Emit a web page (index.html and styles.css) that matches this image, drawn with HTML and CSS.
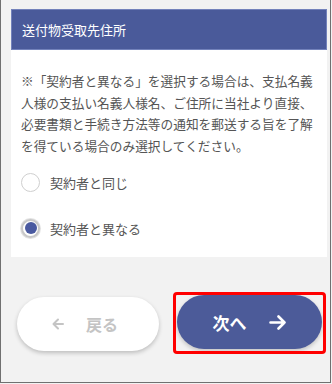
FILE: index.html
```html
<!DOCTYPE html>
<html lang="ja">
<head>
<meta charset="utf-8">
<link rel="stylesheet" href="styles.css">
</head>
<body>
<div class="frame">
  <section class="card">
    <h2 class="card-title">送付物受取先住所</h2>
    <div class="card-body">
      <p class="note">※「契約者と異なる」を選択する場合は、支払名義<br>人様の支払い名義人様名、ご住所に当社より直接、<br>必要書類と手続き方法等の通知を郵送する旨を了解<br>を得ている場合のみ選択してください。</p>
      <label class="radio-row"><span class="radio"></span><span class="radio-label">契約者と同じ</span></label>
      <label class="radio-row"><span class="radio checked"></span><span class="radio-label">契約者と異なる</span></label>
    </div>
  </section>
  <div class="actions">
    <button class="btn btn-back">
      <svg class="arrow-back" width="12" height="12" viewBox="0 0 12 12"><path d="M11 6H2M6 1.5L1.5 6L6 10.5" fill="none" stroke="#c4c4c4" stroke-width="2" stroke-linecap="round" stroke-linejoin="round"/></svg>
      <span>戻る</span>
    </button>
    <button class="btn btn-next">
      <span>次へ</span>
      <svg class="arrow-next" width="18" height="15" viewBox="0 0 18 15"><path d="M1.5 7.5H15.5M9.5 1.5L15.5 7.5L9.5 13.5" fill="none" stroke="#fff" stroke-width="2.6" stroke-linecap="round" stroke-linejoin="round"/></svg>
    </button>
  </div>
  <div class="highlight"></div>
</div>
</body>
</html>
```
FILE: styles.css
```css
html, body {
  margin: 0;
  padding: 0;
}
body {
  background: #f2f2f2;
  font-family: "Noto Sans CJK JP", "Noto Sans", sans-serif;
}
.frame {
  position: relative;
  box-sizing: border-box;
  width: 331px;
  height: 383px;
  border-left: 1px solid #707070;
  border-right: 1px solid #707070;
  border-bottom: 1px solid #707070;
  padding: 9px 4px 0 10px;
  background: #f2f2f2;
}
.card {
  background: #fff;
  width: 316px;
}
.card-title {
  margin: 0;
  height: 41px;
  box-sizing: border-box;
  background: #4a5a9a;
  border: 1px solid #7382bb;
  color: #fff;
  font-size: 13px;
  font-weight: normal;
  line-height: 39px;
  padding-left: 10px;
}
.card-body {
  padding: 20px 4px 6px 10px;
}
.note {
  margin: 0;
  font-size: 12.7px;
  line-height: 21.5px;
  color: #555;
  white-space: nowrap;
}
.radio-row {
  display: flex;
  align-items: center;
  height: 46px;
  gap: 10px;
}
.note + .radio-row {
  margin-top: 3px;
}
.radio {
  box-sizing: border-box;
  width: 19px;
  height: 19px;
  border-radius: 50%;
  border: 1.5px solid #cfcfcf;
  background: #fff;
  position: relative;
}
.radio.checked {
  border: 2px solid #c8c8c8;
  box-shadow: 0 0 0 1px #e2e2e2;
}
.radio.checked::after {
  content: "";
  position: absolute;
  left: 1.5px;
  top: 1.5px;
  width: 12px;
  height: 12px;
  border-radius: 50%;
  background: #4a5aa0;
}
.radio-label {
  font-size: 13px;
  color: #555;
}
.actions {
  display: flex;
  gap: 18px;
  margin-top: 40px;
  padding-left: 6px;
}
.btn {
  height: 54px;
  border: none;
  border-radius: 27px;
  display: flex;
  align-items: center;
  justify-content: center;
  font-family: "Noto Sans CJK JP", "Noto Sans", sans-serif;
  font-weight: bold;
  font-size: 16px;
  padding: 0;
}
.btn-back {
  width: 142px;
  background: #fff;
  color: #c4c4c4;
  gap: 22px;
  box-shadow: 0 2px 4px rgba(0,0,0,0.22);
  padding-right: 6px;
}
.btn-next {
  width: 145px;
  background: #4c5b99;
  color: #fff;
  gap: 22px;
  box-shadow: 0 2px 4px rgba(0,0,0,0.2);
  margin-top: -2px;
  font-size: 17px;
}
.highlight {
  position: absolute;
  left: 172px;
  top: 292px;
  width: 147px;
  height: 56px;
  border: 3px solid #f00;
  border-radius: 4px;
}
```
